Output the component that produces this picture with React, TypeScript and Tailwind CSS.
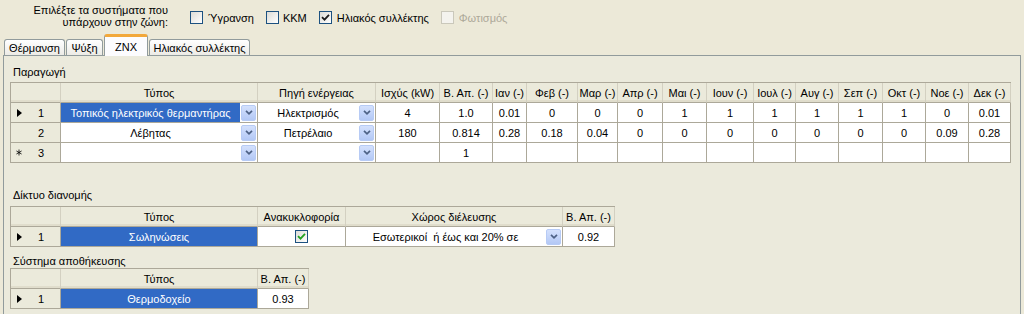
import type { ReactNode } from 'react';

const grid = 'border-[#aca899]';

function Chevron() {
  return (
    <svg width="8" height="5" viewBox="0 0 8 5">
      <path d="M1 0.8l3 3 3-3" stroke="#4d6185" strokeWidth="1.7" fill="none" />
    </svg>
  );
}

function DropButton() {
  return (
    <div className="w-[17px] h-full shrink-0 bg-white flex items-center justify-center">
      <div className="w-[15px] h-[16px] rounded-[2px] border border-[#b7cbf5] bg-gradient-to-b from-[#d4e1fd] to-[#b3c8f5] flex items-center justify-center">
        <Chevron />
      </div>
    </div>
  );
}

function Box({ checked, disabled, green }: { checked?: boolean; disabled?: boolean; green?: boolean }) {
  return (
    <div
      className={`w-[13px] h-[13px] shrink-0 border flex items-center justify-center ${
        disabled ? 'border-[#cac8bb] bg-[#f4f3ee]' : 'border-[#1c5180] bg-gradient-to-br from-[#dcdcd7] to-white'
      }`}
    >
      {checked && (
        <svg width="9" height="9" viewBox="0 0 9 9">
          <path d="M1 4.2l2.5 2.5L8 1.8" stroke={green ? '#21a121' : '#1c1c1c'} strokeWidth="1.8" fill="none" />
        </svg>
      )}
    </div>
  );
}

function HeadCell({ w, children }: { w: string; children?: ReactNode }) {
  return (
    <div
      className={`${w} shrink-0 h-full flex items-center justify-center whitespace-nowrap bg-[#ebeadb] border-r border-b border-r-[#d3d0c1] border-b-[#aca899] shadow-[inset_0_-2px_0_#e0ddcc]`}
    >
      {children}
    </div>
  );
}

function RowHead({ n, mark }: { n?: number; mark?: 'cur' | 'new' }) {
  return (
    <div className={`w-[50px] shrink-0 h-full flex items-center pl-[5px] bg-[#ebeadb] border-r border-b ${grid}`}>
      <span className="w-[6px] flex justify-center">
        {mark === 'cur' && (
          <svg width="5" height="8" viewBox="0 0 5 8">
            <path d="M0 0l5 4-5 4z" fill="#000" />
          </svg>
        )}
        {mark === 'new' && (
          <svg width="9" height="9" viewBox="0 0 9 9">
            <path d="M4.5 0v9M0.6 2.2l7.8 4.6M0.6 6.8l7.8-4.6" stroke="#000" strokeWidth="1.2" />
          </svg>
        )}
      </span>
      <span className="flex-1 text-center">{n}</span>
    </div>
  );
}

function Cell({ w, children, sel }: { w: string; children?: ReactNode; sel?: boolean }) {
  return (
    <div
      className={`${w} shrink-0 h-full flex items-center justify-center whitespace-pre border-r border-b ${grid} ${
        sel ? 'bg-[#316ac5] text-white' : 'bg-white'
      }`}
    >
      {children}
    </div>
  );
}

function Combo({ w, text, sel }: { w: string; text?: string; sel?: boolean }) {
  return (
    <div className={`${w} shrink-0 h-full flex border-r border-b ${grid} bg-white`}>
      <div
        className={`flex-1 flex items-center justify-center whitespace-pre ${sel ? 'bg-[#316ac5] text-white' : ''}`}
      >
        {text}
      </div>
      <DropButton />
    </div>
  );
}

const months = [
  { w: 'w-[34px]', t: 'Ιαν (-)' },
  { w: 'w-[51px]', t: 'Φεβ (-)' },
  { w: 'w-[40px]', t: 'Μαρ (-)' },
  { w: 'w-[45px]', t: 'Απρ (-)' },
  { w: 'w-[44px]', t: 'Μαι (-)' },
  { w: 'w-[47px]', t: 'Ιουν (-)' },
  { w: 'w-[42px]', t: 'Ιουλ (-)' },
  { w: 'w-[43px]', t: 'Αυγ (-)' },
  { w: 'w-[44px]', t: 'Σεπ (-)' },
  { w: 'w-[43px]', t: 'Οκτ (-)' },
  { w: 'w-[43px]', t: 'Νοε (-)' },
  { w: 'w-[42px]', t: 'Δεκ (-)' },
];

const production = [
  { type: 'Τοπικός ηλεκτρικός θερμαντήρας', src: 'Ηλεκτρισμός', kw: '4', eff: '1.0', m: ['0.01', '0', '0', '0', '1', '1', '1', '1', '1', '1', '0', '0.01'] },
  { type: 'Λέβητας', src: 'Πετρέλαιο', kw: '180', eff: '0.814', m: ['0.28', '0.18', '0.04', '0', '0', '0', '0', '0', '0', '0', '0.09', '0.28'] },
  { type: '', src: '', kw: '', eff: '1', m: ['', '', '', '', '', '', '', '', '', '', '', ''] },
];

function Tab({ w, label, active }: { w: string; label: string; active?: boolean }) {
  if (active) {
    return (
      <div
        className={`${w} h-[22px] -mb-px relative z-10 flex justify-center pt-[4px] rounded-t-[3px] border-x border-[#919b9c] bg-[#fcfcfe] border-t-[3px] border-t-[#f2a83a]`}
      >
        {label}
      </div>
    );
  }
  return (
    <div
      className={`${w} h-[16px] flex items-center justify-center rounded-t-[3px] border-x border-t border-[#919b9c] bg-gradient-to-b from-white to-[#ecebe6]`}
    >
      {label}
    </div>
  );
}

export default function App() {
  return (
    <div className="w-[1024px] h-[314px] overflow-hidden bg-[#ece9d8] text-black text-[11px] leading-[12px] font-['Liberation_Sans',Arial,sans-serif]">
      {/* systems present in the zone */}
      <div className="flex h-[34px] pt-[4px]">
        <div className="w-[168px] text-right">
          Επιλέξτε τα συστήματα που
          <br />
          υπάρχουν στην ζώνη:
        </div>
        <div className="flex items-center h-[27px] ml-[22px] gap-[12px]">
          <label className="flex items-center gap-[5px]">
            <Box />
            <span>Ύγρανση</span>
          </label>
          <label className="flex items-center gap-[4px]">
            <Box />
            <span>ΚΚΜ</span>
          </label>
          <label className="flex items-center gap-[5px]">
            <Box checked />
            <span>Ηλιακός συλλέκτης</span>
          </label>
          <label className="flex items-center gap-[5px] text-[#aca899]">
            <Box disabled />
            <span>Φωτισμός</span>
          </label>
        </div>
      </div>

      {/* tabs */}
      <div className="flex items-end h-[21px] pl-[4px] gap-[1px]">
        <Tab w="w-[61px]" label="Θέρμανση" />
        <Tab w="w-[37px]" label="Ψύξη" />
        <Tab w="w-[44px]" label="ΖΝΧ" active />
        <Tab w="w-[101px]" label="Ηλιακός συλλέκτης" />
      </div>

      <div className="ml-[3px] w-[1018px] h-[270px] border border-[#919b9c] bg-[#ebeadc] pl-[6px]">
        {/* production */}
        <div className="pt-[10px] pl-[3px]">Παραγωγή</div>
        <div className={`mt-[4px] inline-flex flex-col border-l border-t ${grid}`}>
          <div className="flex h-[20px]">
            <HeadCell w="w-[50px]" />
            <HeadCell w="w-[197px]">Τύπος</HeadCell>
            <HeadCell w="w-[118px]">Πηγή ενέργειας</HeadCell>
            <HeadCell w="w-[64px]">Ισχύς (kW)</HeadCell>
            <HeadCell w="w-[53px]">Β. Απ. (-)</HeadCell>
            {months.map((m) => (
              <HeadCell key={m.t} w={m.w}>
                {m.t}
              </HeadCell>
            ))}
          </div>
          {production.map((r, i) => (
            <div key={i} className="flex h-[20px]">
              <RowHead n={i + 1} mark={i === 0 ? 'cur' : i === 2 ? 'new' : undefined} />
              <Combo w="w-[197px]" text={r.type} sel={i === 0} />
              <Combo w="w-[118px]" text={r.src} />
              <Cell w="w-[64px]">{r.kw}</Cell>
              <Cell w="w-[53px]">{r.eff}</Cell>
              {months.map((m, j) => (
                <Cell key={m.t} w={m.w}>
                  {r.m[j]}
                </Cell>
              ))}
            </div>
          ))}
        </div>

        {/* distribution network */}
        <div className="mt-[26px] pl-[3px]">Δίκτυο διανομής</div>
        <div className={`mt-[5px] flex flex-col w-fit border-l border-t ${grid}`}>
          <div className="flex h-[20px]">
            <HeadCell w="w-[50px]" />
            <HeadCell w="w-[197px]">Τύπος</HeadCell>
            <HeadCell w="w-[88px]">Ανακυκλοφορία</HeadCell>
            <HeadCell w="w-[217px]">Χώρος διέλευσης</HeadCell>
            <HeadCell w="w-[52px]">Β. Απ. (-)</HeadCell>
          </div>
          <div className="flex h-[20px]">
            <RowHead n={1} mark="cur" />
            <Cell w="w-[197px]" sel>
              Σωληνώσεις
            </Cell>
            <Cell w="w-[88px]">
              <Box checked green />
            </Cell>
            <Combo w="w-[217px]" text="Εσωτερικοί  ή έως και 20% σε" />
            <Cell w="w-[52px]">0.92</Cell>
          </div>
        </div>

        {/* storage */}
        <div className="mt-[8px] pl-[3px]">Σύστημα αποθήκευσης</div>
        <div className={`mt-[1px] flex flex-col w-fit border-l border-t ${grid}`}>
          <div className="flex h-[20px]">
            <HeadCell w="w-[50px]" />
            <HeadCell w="w-[197px]">Τύπος</HeadCell>
            <HeadCell w="w-[51px]">Β. Απ. (-)</HeadCell>
          </div>
          <div className="flex h-[20px]">
            <RowHead n={1} mark="cur" />
            <Cell w="w-[197px]" sel>
              Θερμοδοχείο
            </Cell>
            <Cell w="w-[51px]">0.93</Cell>
          </div>
        </div>
      </div>
    </div>
  );
}
